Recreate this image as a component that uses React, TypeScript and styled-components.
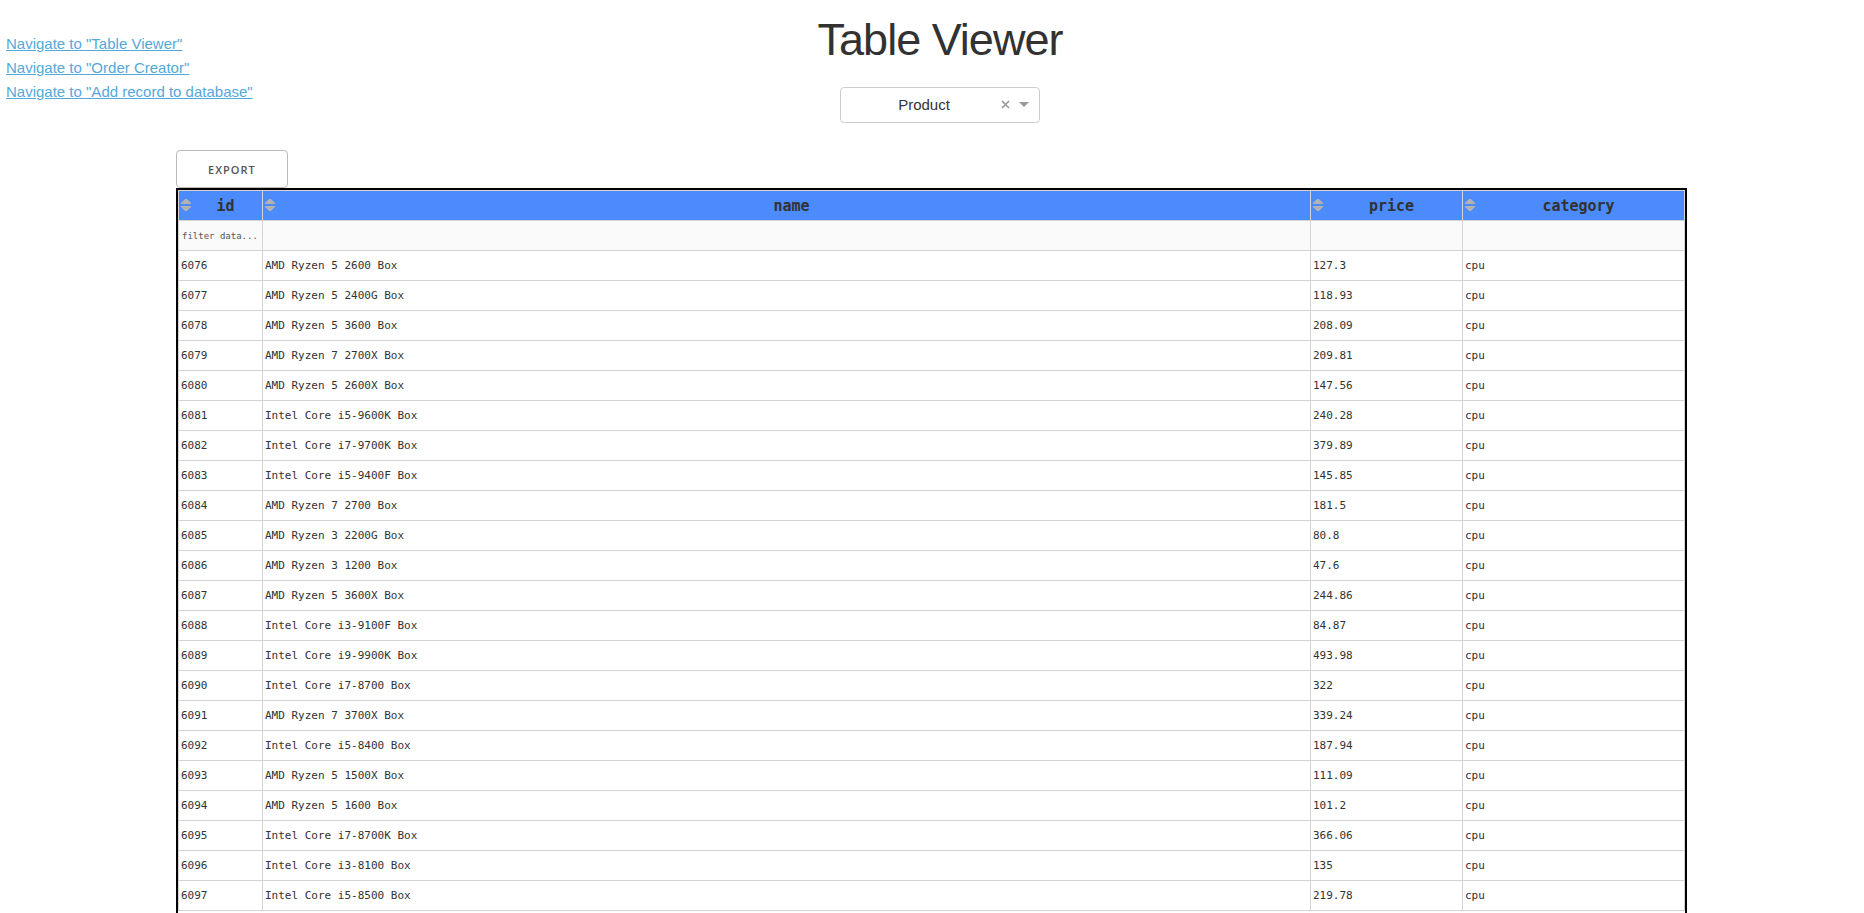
import React, { useState } from "react";
import styled, { createGlobalStyle } from "styled-components";

const GlobalStyle = createGlobalStyle`
  *, *::before, *::after { box-sizing: border-box; }
  body {
    margin: 0;
    background: #fff;
    color: #323232;
    font: 15px/24px "Liberation Sans", Arial, sans-serif;
  }
`;

const Page = styled.div`
  display: flex;
  flex-direction: column;
  height: 100vh;
  overflow: hidden;
`;

const Header = styled.header`
  display: grid;
  grid-template-columns: 1fr auto 1fr;
`;

const Nav = styled.nav`
  display: flex;
  flex-direction: column;
  align-items: flex-start;
  padding: 32px 0 0 6px;
`;

const NavLink = styled.a`
  color: #55a8da;
  text-decoration: underline;
`;

const Center = styled.div`
  display: flex;
  flex-direction: column;
  align-items: center;
  padding: 13px 0 27px 16px;
`;

const Title = styled.h1`
  margin: 0 0 20px;
  font-size: 45px;
  line-height: 54px;
  font-weight: 300;
  letter-spacing: -1px;
`;

const Picker = styled.div`
  position: relative;
  width: 200px;
`;

const PickerSelect = styled.select`
  display: block;
  width: 100%;
  height: 36px;
  padding: 0 32px 0 0;
  border: 1px solid #ccc;
  border-radius: 4px;
  background: #fff;
  color: #333;
  font: inherit;
  text-align: center;
  text-align-last: center;
  appearance: none;
`;

const ClearButton = styled.button`
  position: absolute;
  top: 9px;
  right: 26px;
  display: flex;
  align-items: center;
  justify-content: center;
  width: 17px;
  height: 17px;
  padding: 0;
  border: 0;
  background: none;
  cursor: pointer;
`;

const Caret = styled.svg`
  position: absolute;
  top: 15px;
  right: 11px;
  pointer-events: none;
`;

const Main = styled.main`
  display: flex;
  flex: 1;
  flex-direction: column;
  align-items: stretch;
  padding: 0 177px 0 176px;
`;

const ExportButton = styled.button`
  align-self: flex-start;
  height: 38px;
  padding: 0 31px;
  border: 1px solid #bbb;
  border-radius: 4px;
  background: transparent;
  color: #555;
  font: 600 11px/38px "Open Sans", sans-serif;
  letter-spacing: 1px;
  text-transform: uppercase;
  cursor: pointer;
`;

const TableFrame = styled.div`
  flex: 1;
  border: 2px solid #000;
  border-bottom: 0;
`;

const Table = styled.table`
  width: 100%;
  table-layout: fixed;
  border-collapse: collapse;
  font: 11px/16px "DejaVu Sans Mono", monospace;
`;

const Col = styled.col<{ $width?: number }>`
  width: ${({ $width }) => ($width ? `${$width}px` : "auto")};
`;

const HeadCell = styled.th`
  height: 30px;
  padding: 0 2px;
  border: 1px solid #d3d3d3;
  background: #4b8bfb;
  font-size: 15px;
  font-weight: 700;
`;

const HeadContent = styled.div`
  display: flex;
  align-items: center;
`;

const HeadLabel = styled.span`
  flex: 1;
  text-align: center;
`;

const SortButton = styled.button`
  display: flex;
  padding: 0;
  border: 0;
  background: none;
  cursor: pointer;
`;

const FilterCell = styled.td`
  height: 30px;
  padding: 0 2px;
  border: 1px solid #d3d3d3;
  background: #fafafa;
`;

const FilterInput = styled.input`
  display: block;
  width: 100%;
  height: 28px;
  padding: 0 1px;
  border: 0;
  outline: 0;
  background: transparent;
  color: #555;
  font: 9px/16px "DejaVu Sans Mono", monospace;

  &::placeholder {
    color: #555;
    opacity: 1;
  }
`;

const Cell = styled.td`
  height: 30px;
  padding: 0 2px;
  border: 1px solid #d3d3d3;
  white-space: nowrap;
`;

type Column = { key: string; width?: number; placeholder?: string };

const columns: Column[] = [
  { key: "id", width: 84, placeholder: "filter data..." },
  { key: "name" },
  { key: "price", width: 152 },
  { key: "category", width: 222 },
];

const products: [string, string][] = [
  ["AMD Ryzen 5 2600 Box", "127.3"],
  ["AMD Ryzen 5 2400G Box", "118.93"],
  ["AMD Ryzen 5 3600 Box", "208.09"],
  ["AMD Ryzen 7 2700X Box", "209.81"],
  ["AMD Ryzen 5 2600X Box", "147.56"],
  ["Intel Core i5-9600K Box", "240.28"],
  ["Intel Core i7-9700K Box", "379.89"],
  ["Intel Core i5-9400F Box", "145.85"],
  ["AMD Ryzen 7 2700 Box", "181.5"],
  ["AMD Ryzen 3 2200G Box", "80.8"],
  ["AMD Ryzen 3 1200 Box", "47.6"],
  ["AMD Ryzen 5 3600X Box", "244.86"],
  ["Intel Core i3-9100F Box", "84.87"],
  ["Intel Core i9-9900K Box", "493.98"],
  ["Intel Core i7-8700 Box", "322"],
  ["AMD Ryzen 7 3700X Box", "339.24"],
  ["Intel Core i5-8400 Box", "187.94"],
  ["AMD Ryzen 5 1500X Box", "111.09"],
  ["AMD Ryzen 5 1600 Box", "101.2"],
  ["Intel Core i7-8700K Box", "366.06"],
  ["Intel Core i3-8100 Box", "135"],
  ["Intel Core i5-8500 Box", "219.78"],
];

const firstId = 6076;

export default function App() {
  const [source, setSource] = useState("Product");

  return (
    <Page>
      <GlobalStyle />
      <Header>
        <Nav>
          <NavLink href="#table-viewer">Navigate to "Table Viewer"</NavLink>
          <NavLink href="#order-creator">Navigate to "Order Creator"</NavLink>
          <NavLink href="#add-record">Navigate to "Add record to database"</NavLink>
        </Nav>
        <Center>
          <Title>Table Viewer</Title>
          <Picker>
            <PickerSelect
              aria-label="Table"
              value={source}
              onChange={(e) => setSource(e.target.value)}
            >
              <option value="" />
              <option value="Product">Product</option>
            </PickerSelect>
            <ClearButton type="button" aria-label="Clear" onClick={() => setSource("")}>
              <svg width="9" height="9" viewBox="0 0 9 9">
                <path d="M1 1L8 8M8 1L1 8" stroke="#999" strokeWidth="1.7" />
              </svg>
            </ClearButton>
            <Caret width="10" height="5" viewBox="0 0 10 5">
              <path d="M0 0H10L5 5Z" fill="#999" />
            </Caret>
          </Picker>
        </Center>
      </Header>
      <Main>
        <ExportButton type="button">Export</ExportButton>
        <TableFrame>
          <Table>
            <colgroup>
              {columns.map((c) => (
                <Col key={c.key} $width={c.width} />
              ))}
            </colgroup>
            <thead>
              <tr>
                {columns.map((c) => (
                  <HeadCell key={c.key} scope="col">
                    <HeadContent>
                      <SortButton type="button" aria-label={`Sort by ${c.key}`}>
                        <svg width="10" height="16" viewBox="0 0 10 16">
                          <path d="M0 6V5L4 1H6L10 5V6ZM0 8H10V9L6 13H4L0 9Z" fill="#b2b2b2" />
                        </svg>
                      </SortButton>
                      <HeadLabel>{c.key}</HeadLabel>
                    </HeadContent>
                  </HeadCell>
                ))}
              </tr>
            </thead>
            <tbody>
              <tr>
                {columns.map((c) => (
                  <FilterCell key={c.key}>
                    <FilterInput aria-label={`Filter ${c.key}`} placeholder={c.placeholder} />
                  </FilterCell>
                ))}
              </tr>
              {products.map(([name, price], i) => (
                <tr key={name}>
                  <Cell>{firstId + i}</Cell>
                  <Cell>{name}</Cell>
                  <Cell>{price}</Cell>
                  <Cell>cpu</Cell>
                </tr>
              ))}
            </tbody>
          </Table>
        </TableFrame>
      </Main>
    </Page>
  );
}
